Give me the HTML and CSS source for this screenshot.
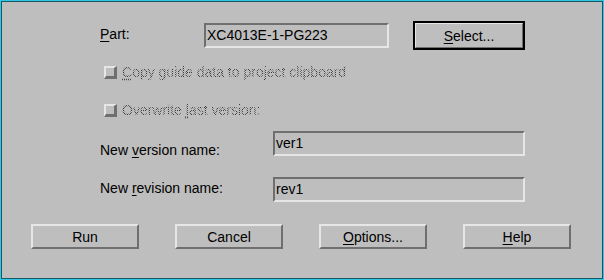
FILE: index.html
```html
<!DOCTYPE html>
<html lang="en">
<head>
  <meta charset="UTF-8" />
  <title>Update Guide Data</title>
  <link rel="stylesheet" href="styles.css">
</head>
<body>

  <div class="dialog">
    <div class="panel">

      <div class="row row-part">
        <span class="label label-part"><u>P</u>art:</span>
        <div class="field field-part">XC4013E-1-PG223</div>
        <button class="btn btn-default"><u>S</u>elect...</button>
      </div>

      <div class="row check-row check-first">
        <span class="check"></span>
        <span class="disabled"><u>C</u>opy guide data to project clipboard</span>
      </div>

      <div class="row check-row check-second">
        <span class="check"></span>
        <span class="disabled">Overwrite <u>l</u>ast version:</span>
      </div>

      <div class="row name-row name-first">
        <span class="label label-name">New <u>v</u>ersion name:</span>
        <div class="field field-name">ver1</div>
      </div>

      <div class="row name-row name-second">
        <span class="label label-name">New <u>r</u>evision name:</span>
        <div class="field field-name">rev1</div>
      </div>

      <div class="actions">
        <button class="btn">Run</button>
        <button class="btn">Cancel</button>
        <button class="btn"><u>O</u>ptions...</button>
        <button class="btn"><u>H</u>elp</button>
      </div>

    </div>
  </div>

</body>
</html>
```

FILE: styles.css
```css
body {
  margin: 0;
  font-family: 'Liberation Sans', Arial, sans-serif;
  font-size: 14px;
  color: #000;
  background-color: #bebebe;
}

u {
  text-decoration: underline;
  text-underline-offset: 2px;
}

.dialog {
  width: 604px;
  height: 280px;
  box-sizing: border-box;
  border: 1px solid #2fc6e6;
}

.panel {
  height: 100%;
  box-sizing: border-box;
  border: 1px solid #1d5563;
  background-color: #bebebe;
  padding: 19px 0 0 98px;
}

.row {
  display: flex;
  align-items: center;
}

.row-part {
  height: 29px;
}

.label-part {
  width: 104px;
  margin-top: -4px;
}

.field {
  box-sizing: border-box;
  height: 25px;
  padding: 0 3px 0 1px;
  border-style: solid;
  border-width: 2px;
  border-color: #6f6f6f #e6e6e6 #e6e6e6 #6f6f6f;
  line-height: 21px;
  white-space: nowrap;
}

.field-part {
  width: 185px;
}

.btn {
  box-sizing: border-box;
  width: 108px;
  height: 25px;
  padding: 0;
  font-family: inherit;
  font-size: 14px;
  color: #000;
  background-color: #bebebe;
  border-style: solid;
  border-width: 2px;
  border-color: #e6e6e6 #6f6f6f #6f6f6f #e6e6e6;
}

.btn-default {
  width: 112px;
  height: 29px;
  margin-left: 24px;
  outline: 2px solid #000;
  outline-offset: -2px;
  border-width: 3px;
}

.check-row {
  height: 14px;
  padding-left: 4px;
}

.check-first {
  margin-top: 15px;
}

.check-second {
  margin-top: 24px;
}

.check {
  box-sizing: border-box;
  width: 13px;
  height: 13px;
  margin-right: 5px;
  border-style: solid;
  border-width: 2px 3px 3px 2px;
  border-color: #e6e6e6 #6f6f6f #6f6f6f #e6e6e6;
}

.disabled {
  color: transparent;
  background: repeating-conic-gradient(#3c3c3c 0 25%, transparent 0 50%) 0 0 / 2px 2px;
  -webkit-background-clip: text;
  background-clip: text;
}

.disabled u {
  text-decoration-color: #4a4a4a;
  text-decoration-style: dotted;
}

.name-row {
  height: 25px;
}

.name-first {
  margin-top: 14px;
}

.name-second {
  margin-top: 21px;
}

.label-name {
  width: 173px;
}

.name-first .label-name {
  margin-top: 12px;
}

.name-second .label-name {
  margin-top: -4px;
}

.field-name {
  width: 252px;
}

.actions {
  display: flex;
  gap: 36px;
  margin: 22px 0 0 -69px;
}
```
